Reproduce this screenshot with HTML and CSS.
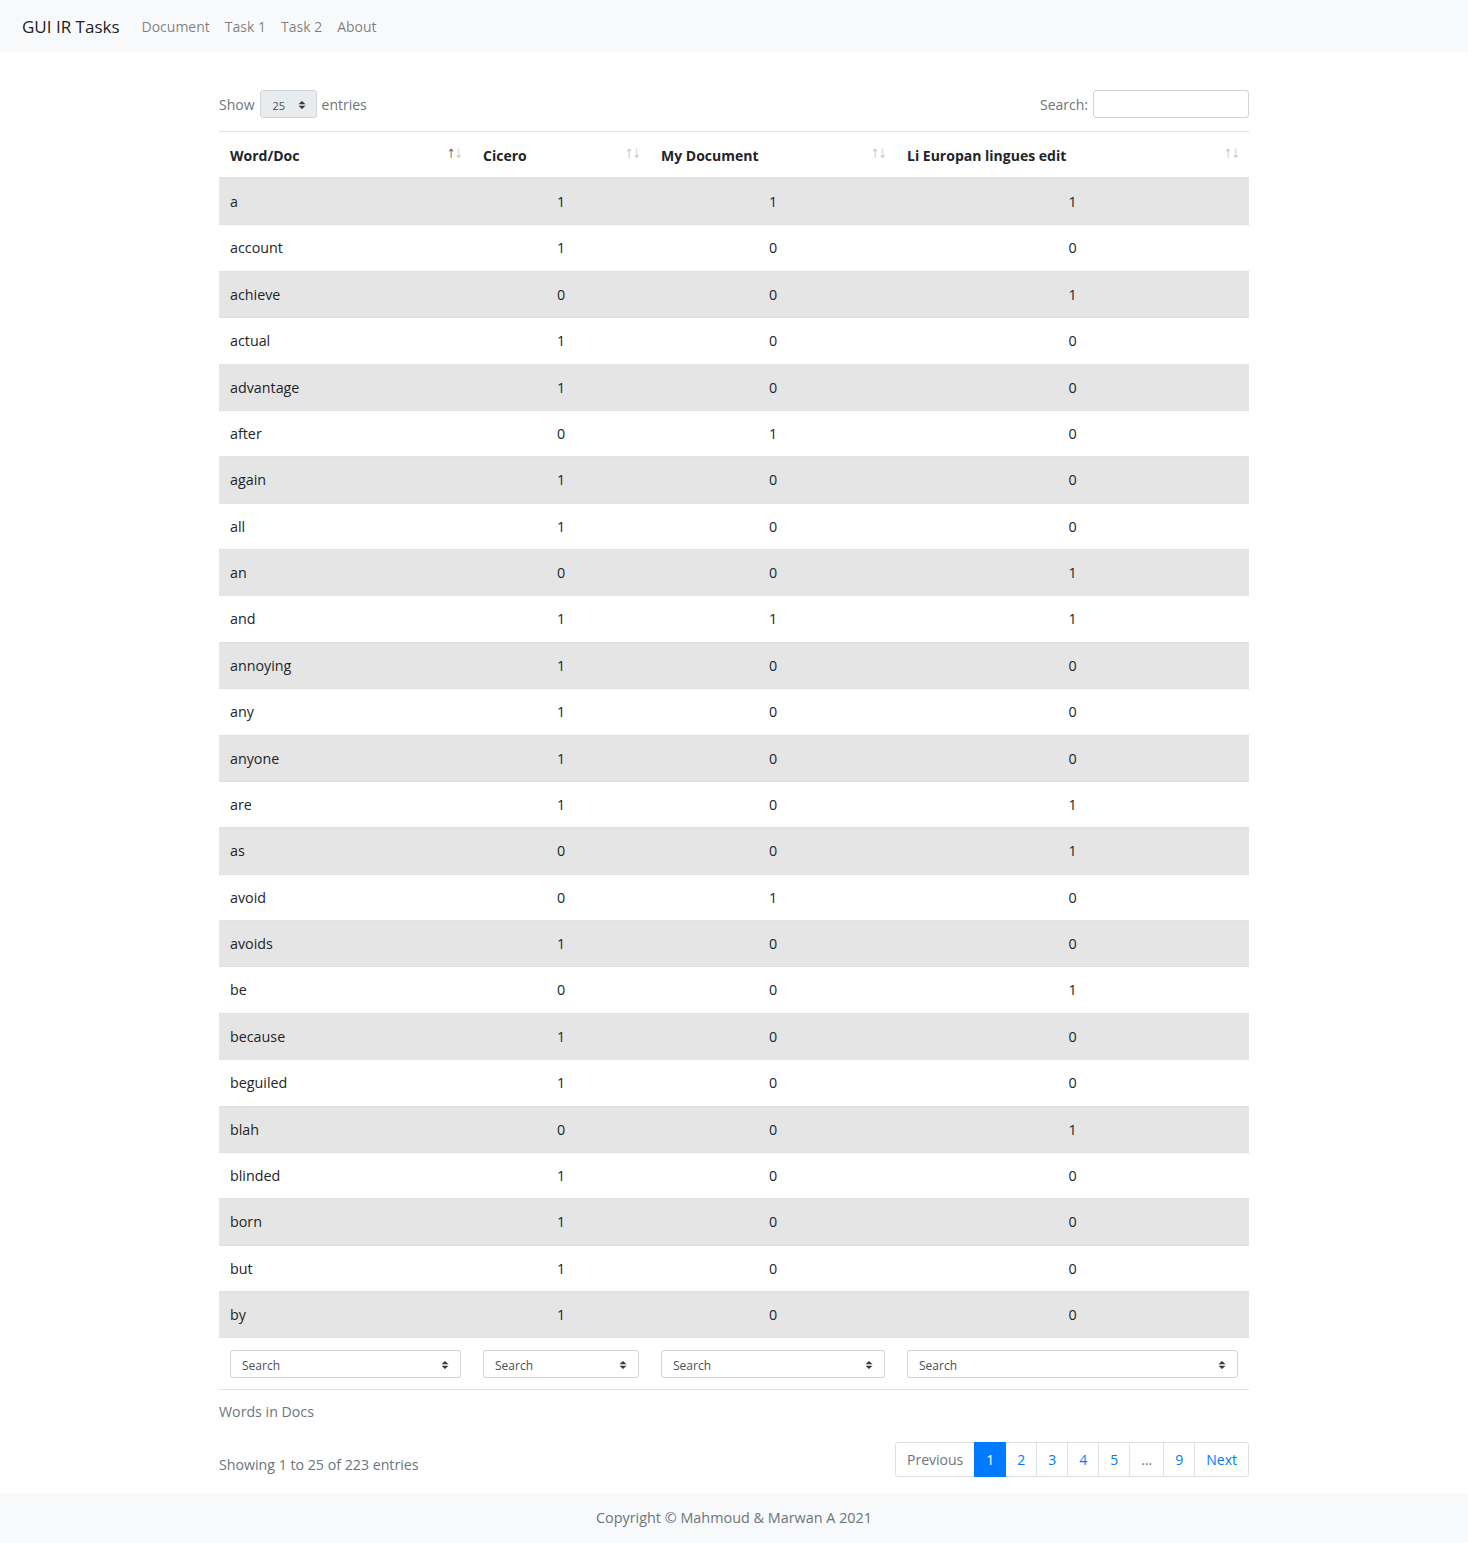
FILE: index.html
```html
<!DOCTYPE html>
<html lang="en">
<head>
<meta charset="utf-8">
<title>GUI IR Tasks</title>
<link rel="stylesheet" href="styles.css">
</head>
<body>
<nav class="navbar">
  <a class="brand" href="#">GUI IR Tasks</a>
  <ul class="nav">
    <li><a href="#">Document</a></li>
    <li><a href="#">Task 1</a></li>
    <li><a href="#">Task 2</a></li>
    <li><a href="#">About</a></li>
  </ul>
</nav>
<main class="container">
  <div class="controls">
    <label class="length">Show <span class="mini-select">25 <svg class="caret" width="8" height="10" viewBox="0 0 8 10"><path d="M4 1 L7.5 4.2 H0.5 Z M4 9 L0.5 5.8 H7.5 Z" fill="#343a40"/></svg></span> entries</label>
    <label class="filter">Search: <span class="search-box"></span></label>
  </div>
  <table class="data">
    <caption>Words in Docs</caption>
    <colgroup>
      <col class="c1"><col class="c2"><col class="c3"><col class="c4">
    </colgroup>
    <thead>
      <tr>
        <th><span class="th-in">Word/Doc<span class="sort"><span class="up on">↑</span><span class="down">↓</span></span></span></th>
        <th><span class="th-in">Cicero<span class="sort"><span class="up">↑</span><span class="down">↓</span></span></span></th>
        <th><span class="th-in">My Document<span class="sort"><span class="up">↑</span><span class="down">↓</span></span></span></th>
        <th><span class="th-in">Li Europan lingues edit<span class="sort"><span class="up">↑</span><span class="down">↓</span></span></span></th>
      </tr>
    </thead>
    <tbody>
      <tr><td>a</td><td>1</td><td>1</td><td>1</td></tr>
      <tr><td>account</td><td>1</td><td>0</td><td>0</td></tr>
      <tr><td>achieve</td><td>0</td><td>0</td><td>1</td></tr>
      <tr><td>actual</td><td>1</td><td>0</td><td>0</td></tr>
      <tr><td>advantage</td><td>1</td><td>0</td><td>0</td></tr>
      <tr><td>after</td><td>0</td><td>1</td><td>0</td></tr>
      <tr><td>again</td><td>1</td><td>0</td><td>0</td></tr>
      <tr><td>all</td><td>1</td><td>0</td><td>0</td></tr>
      <tr><td>an</td><td>0</td><td>0</td><td>1</td></tr>
      <tr><td>and</td><td>1</td><td>1</td><td>1</td></tr>
      <tr><td>annoying</td><td>1</td><td>0</td><td>0</td></tr>
      <tr><td>any</td><td>1</td><td>0</td><td>0</td></tr>
      <tr><td>anyone</td><td>1</td><td>0</td><td>0</td></tr>
      <tr><td>are</td><td>1</td><td>0</td><td>1</td></tr>
      <tr><td>as</td><td>0</td><td>0</td><td>1</td></tr>
      <tr><td>avoid</td><td>0</td><td>1</td><td>0</td></tr>
      <tr><td>avoids</td><td>1</td><td>0</td><td>0</td></tr>
      <tr><td>be</td><td>0</td><td>0</td><td>1</td></tr>
      <tr><td>because</td><td>1</td><td>0</td><td>0</td></tr>
      <tr><td>beguiled</td><td>1</td><td>0</td><td>0</td></tr>
      <tr><td>blah</td><td>0</td><td>0</td><td>1</td></tr>
      <tr><td>blinded</td><td>1</td><td>0</td><td>0</td></tr>
      <tr><td>born</td><td>1</td><td>0</td><td>0</td></tr>
      <tr><td>but</td><td>1</td><td>0</td><td>0</td></tr>
      <tr><td>by</td><td>1</td><td>0</td><td>0</td></tr>
    </tbody>
    <tfoot>
      <tr>
        <td><span class="col-select">Search<svg class="caret" width="8" height="10" viewBox="0 0 8 10"><path d="M4 1 L7.5 4.2 H0.5 Z M4 9 L0.5 5.8 H7.5 Z" fill="#343a40"/></svg></span></td>
        <td><span class="col-select">Search<svg class="caret" width="8" height="10" viewBox="0 0 8 10"><path d="M4 1 L7.5 4.2 H0.5 Z M4 9 L0.5 5.8 H7.5 Z" fill="#343a40"/></svg></span></td>
        <td><span class="col-select">Search<svg class="caret" width="8" height="10" viewBox="0 0 8 10"><path d="M4 1 L7.5 4.2 H0.5 Z M4 9 L0.5 5.8 H7.5 Z" fill="#343a40"/></svg></span></td>
        <td><span class="col-select">Search<svg class="caret" width="8" height="10" viewBox="0 0 8 10"><path d="M4 1 L7.5 4.2 H0.5 Z M4 9 L0.5 5.8 H7.5 Z" fill="#343a40"/></svg></span></td>
      </tr>
    </tfoot>
  </table>
  <div class="bottom">
    <div class="info">Showing 1 to 25 of 223 entries</div>
    <ul class="pagination">
      <li class="page disabled">Previous</li>
      <li class="page active">1</li>
      <li class="page">2</li>
      <li class="page">3</li>
      <li class="page">4</li>
      <li class="page">5</li>
      <li class="page disabled">…</li>
      <li class="page">9</li>
      <li class="page">Next</li>
    </ul>
  </div>
</main>
<footer class="footer">Copyright © Mahmoud &amp; Marwan A 2021</footer>
</body>
</html>
```
FILE: styles.css
```css
* { box-sizing: border-box; }
html, body { margin: 0; padding: 0; }
body {
  font-family: "Open Sans", "Noto Sans", "Liberation Sans", sans-serif;
  font-size: 13px;
  color: #212529;
  background: #fff;
}
a { text-decoration: none; }

.navbar {
  height: 52px;
  background: #f8f9fa;
  display: flex;
  align-items: center;
  padding: 0 22px;
}
.brand {
  font-size: 17px;
  color: rgba(0,0,0,.9);
  margin-right: 22px;
}
.nav {
  list-style: none;
  margin: 0;
  padding: 0;
  display: flex;
  gap: 15px;
  font-size: 14px;
}
.nav a { color: rgba(0,0,0,.5); }

.container {
  width: 1030px;
  margin: 0 auto;
  padding-top: 38px;
  padding-bottom: 16px;
}
.controls {
  display: flex;
  justify-content: space-between;
  align-items: center;
  height: 28px;
  margin-bottom: 13px;
  color: #6c757d;
  font-size: 14px;
}
.length, .filter { display: flex; align-items: center; gap: 5px; }
.mini-select {
  width: 57px;
  height: 28px;
  border: 1px solid #ced4da;
  border-radius: 3px;
  background: #e9ecef;
  font-size: 11px;
  color: #495057;
  display: flex;
  align-items: center;
  justify-content: space-between;
  padding: 2px 10px 0 12px;
}
.search-box {
  width: 156px;
  height: 28px;
  border: 1px solid #ced4da;
  border-radius: 3px;
  background: #fff;
}

.data {
  width: 100%;
  border-collapse: collapse;
  table-layout: fixed;
}
.c1 { width: 253px; }
.c2 { width: 178px; }
.c3 { width: 246px; }
.c4 { width: 353px; }
.data caption {
  caption-side: bottom;
  text-align: left;
  color: #6c757d;
  padding: 11px 0 0;
  font-size: 14.2px;
  line-height: 22px;
}
.data th {
  text-align: left;
  font-weight: 700;
  font-size: 14px;
  padding: 13px 10px 10px 11px;
  line-height: 22px;
  border-top: 1px solid #dee2e6;
  border-bottom: 2px solid #dee2e6;
}
.th-in { display: flex; justify-content: space-between; align-items: center; }
.sort { display: flex; color: #c8c8c8; font-size: 13px; font-weight: 400; margin-top: -5px; letter-spacing: -1px; font-family: "DejaVu Sans", sans-serif; transform: scaleX(0.75); transform-origin: right center; }
.sort .on { color: #666; }
.data tbody td {
  padding: 12px 11px;
  line-height: 21.375px;
  font-size: 14.3px;
  border-top: 1px solid #dee2e6;
  text-align: center;
}
.data tbody tr:first-child td { border-top: none; }
.data tbody td:first-child { text-align: left; }
.data tbody tr:nth-child(odd) td { background: #e5e5e5; }
.data tfoot td {
  padding: 12px 11px 11px;
  border-top: 1px solid #dee2e6;
  border-bottom: 1px solid #dee2e6;
}
.col-select {
  height: 28px;
  border: 1px solid #ced4da;
  border-radius: 3px;
  background: #fff;
  display: flex;
  align-items: center;
  justify-content: space-between;
  padding: 2px 11px 0 11px;
  font-size: 12px;
  color: #495057;
}

.bottom {
  display: flex;
  justify-content: space-between;
  align-items: center;
  margin-top: 19px;
}
.info { color: #6c757d; font-size: 14.2px; padding-top: 10px; }
.pagination {
  list-style: none;
  margin: 0;
  padding: 0;
  display: flex;
  font-size: 14px;
}
.page {
  height: 35px;
  line-height: 33px;
  padding: 0 11px;
  border: 1px solid #dee2e6;
  margin-left: -1px;
  color: #007bff;
  background: #fff;
}
.page:first-child { border-radius: 3px 0 0 3px; margin-left: 0; }
.page:last-child { border-radius: 0 3px 3px 0; }
.page.disabled { color: #6c757d; }
.page.active { background: #007bff; border-color: #007bff; color: #fff; position: relative; z-index: 1; }

.footer {
  background: #f8f9fa;
  height: 50px;
  line-height: 50px;
  text-align: center;
  color: #6c757d;
  font-size: 14.4px;
}
```
